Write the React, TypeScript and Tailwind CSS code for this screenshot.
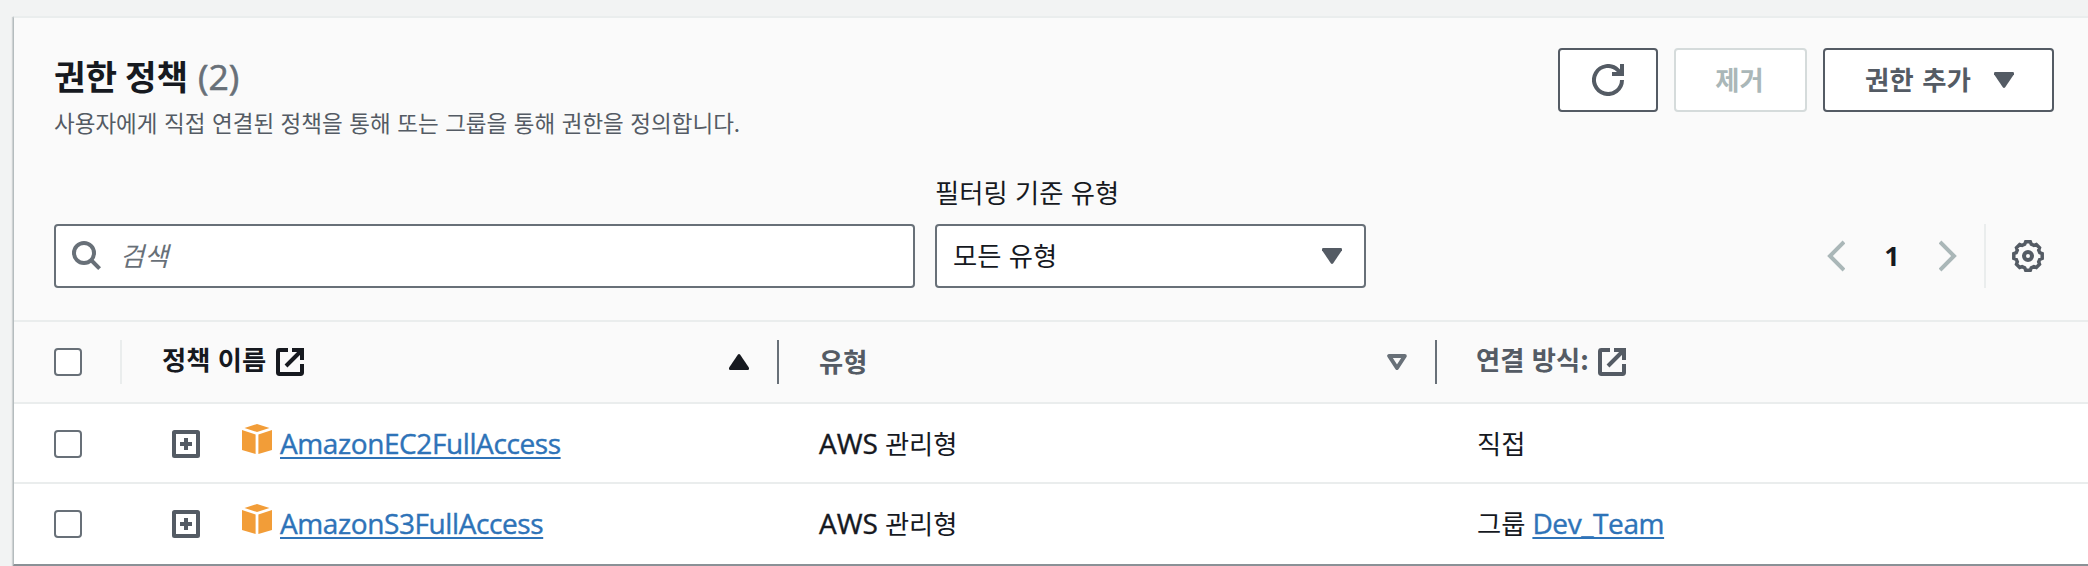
import type { ReactNode } from "react";

const ko = "font-['Noto_Sans_CJK_KR',sans-serif]";
const latin = "font-['Open_Sans','Noto_Sans_CJK_KR',sans-serif]";
const body = "text-[26.3px] leading-[40px] [word-spacing:1.5px] whitespace-nowrap";
const link =
  "text-[28px] leading-[34px] tracking-[-0.4px] whitespace-nowrap text-[#2e73b8] underline decoration-2 underline-offset-[3px] [text-decoration-skip-ink:none] [-webkit-text-stroke:0.4px_#2e73b8]";

function ExternalIcon() {
  return (
    <svg width="28" height="28" viewBox="0 0 28 28" fill="none" stroke="currentColor" strokeWidth="4">
      <path d="M12 2H3.4Q2 2 2 3.4V24.600Q2 26 3.400 26H24.600Q26 26 26 24.600V16" />
      <path d="M16 2H26V12M26 2L10 18" />
    </svg>
  );
}

function Triangle({ up = false }: { up?: boolean }) {
  return (
    <svg width="20" height="16" viewBox="0 0 20 16" fill="currentColor" className={up ? "rotate-180" : ""}>
      <path d="M1.2 0H18.800Q20 0 20 1.200V2.200L11.200 15.200Q10 16.600 8.800 15.200L0 2.200V1.200Q0 0 1.200 0Z" />
    </svg>
  );
}

function OutlineTriangle() {
  return (
    <svg width="20" height="16" viewBox="0 0 20 16" fill="none" stroke="currentColor" strokeWidth="4" strokeLinejoin="round">
      <path d="M2.200 2H17.800L10 14Z" />
    </svg>
  );
}

function SearchIcon() {
  return (
    <svg width="30" height="30" viewBox="0 0 30 30" fill="none" stroke="#687078" strokeWidth="4">
      <circle cx="12" cy="12" r="10" />
      <path d="M19 19L27.600 27.600" />
    </svg>
  );
}

function RefreshIcon() {
  return (
    <svg width="32" height="32" viewBox="0 0 32 32" fill="none" stroke="#545b64" strokeWidth="4">
      <path d="M30 16A14 14 0 1 1 25.900 6.100L28 8.500" />
      <path d="M30 0V10H20" />
    </svg>
  );
}

function Chevron({ right = false }: { right?: boolean }) {
  return (
    <svg width="18" height="32" viewBox="0 0 18 32" fill="none" stroke="#aab7b8" strokeWidth="4" className={right ? "rotate-180" : ""}>
      <path d="M17 2L3 16L17 30" />
    </svg>
  );
}

function GearIcon() {
  return (
    <svg width="32" height="32" viewBox="0 0 32 32" fill="none" stroke="#545b64">
      <path
        strokeWidth="3.5"
        d="M13.700 1.800H18.300L19.300 4.200L21.900 5.300L24.300 4.500L27.500 7.700L26.700 10.100L27.800 12.700L30.200 13.700V18.300L27.800 19.300L26.700 21.900L27.500 24.300L24.300 27.500L21.900 26.700L19.300 27.800L18.300 30.200H13.700L12.700 27.800L10.100 26.700L7.700 27.500L4.500 24.300L5.300 21.900L4.200 19.300L1.800 18.300V13.700L4.200 12.700L5.300 10.100L4.500 7.700L7.700 4.500L10.100 5.300L12.700 4.200Z"
      />
      <circle cx="16" cy="16" r="4" strokeWidth="4" />
    </svg>
  );
}

function ExpandIcon() {
  return (
    <svg width="28" height="28" viewBox="0 0 28 28" fill="none" stroke="#545b64" strokeWidth="4">
      <rect x="2" y="2" width="24" height="24" rx="0.500" />
      <path d="M14 8V20M8 14H20" />
    </svg>
  );
}

function CubeIcon() {
  return (
    <svg width="30" height="30" viewBox="0 0 30 30" fill="#f29d38">
      <path d="M15 0L27.500 4L15 8L2.500 4Z" />
      <path d="M0 6L13.600 10.500V30L0 26Z" />
      <path d="M30 6L16.400 10.500V30L30 26Z" />
    </svg>
  );
}

function Checkbox() {
  return <span className="block size-7 rounded-[4px] border-2 border-[#687078] bg-white" />;
}

function HeaderCell({ children, divider = "bg-[#687078]" }: { children: ReactNode; divider?: string }) {
  return (
    <div className="flex items-center">
      <div className="flex flex-1 items-center pl-10">{children}</div>
      <span className={`h-11 w-[2px] ${divider}`} />
    </div>
  );
}

const columns = "grid grid-cols-[108px_657px_658px_1fr]";

function Row({ name, last = false, children }: { name: string; last?: boolean; children: ReactNode }) {
  return (
    <div className={`${columns} bg-white ${last ? "h-20" : "h-20 border-b-2 border-[#eaeded]"}`}>
      <div className="flex items-start pt-[26px] pl-10">
        <Checkbox />
      </div>
      <div className="flex items-start pt-[20px] pl-[50px]">
        <span className="mt-[6px]"><ExpandIcon /></span>
        <span className="ml-[42px]"><CubeIcon /></span>
        <a className={`${latin} ${link} mt-[2px] ml-2`}>{name}</a>
      </div>
      <div className={`${body} flex items-baseline pt-[19px] pl-10 text-[#16191f]`}>
        <span className={`${latin} text-[28px] leading-[40px] [-webkit-text-stroke:0.4px_#16191f]`}>AWS</span>
        <span className={`${ko} ml-[7px]`}>관리형</span>
      </div>
      <div className={`${body} flex items-baseline pt-[19px] pl-10 text-[#16191f]`}>{children}</div>
    </div>
  );
}

export default function App() {
  return (
    <div className="h-[566px] w-[2088px] overflow-hidden bg-[#f2f3f3] pt-4 pl-[13px]">
      <div className="h-[550px] border-t-2 border-b-2 border-l border-t-[#eaeded] border-b-[#8a9196] border-l-[#b5bcbe] bg-[#fafafa] shadow-[-1px_1px_1px_rgba(0,28,36,0.15)]">
        <div className="flex h-[302px] flex-col pl-10">
          <div className="flex justify-between pt-[30px] pr-[34px]">
            <div>
              <h2 className="-mt-[3px] flex h-[60px] items-baseline whitespace-nowrap">
                <span className={`${ko} text-[34.300px] leading-[60px] font-bold text-[#16191f]`}>권한 정책</span>
                <span className={`${latin} ml-[10px] text-[35.500px] leading-[60px] text-[#687078] [-webkit-text-stroke:0.6px_#687078]`}>(2)</span>
              </h2>
              <p className={`${ko} mt-[1px] text-[22.500px] leading-8 whitespace-nowrap text-[#545b64] [word-spacing:1.500px]`}>
                사용자에게 직접 연결된 정책을 통해 또는 그룹을 통해 권한을 정의합니다.
              </p>
            </div>
            <div className={`${ko} ${body} flex gap-4 font-bold`}>
              <button className="flex h-16 w-[100px] items-center justify-center rounded-[4px] border-2 border-[#545b64] bg-white">
                <RefreshIcon />
              </button>
              <button className="flex h-16 w-[133px] items-center justify-center rounded-[4px] border-2 border-[#d5dbdb] bg-white pr-[2px] pb-[3px] text-[#aab7b8]">
                제거
              </button>
              <button className="flex h-16 w-[231px] items-center justify-between rounded-[4px] border-2 border-[#545b64] bg-white pr-[38px] pl-10 text-[#545b64]">
                <span className="-mt-[3px] tracking-[0.3px] [word-spacing:2px]">권한 추가</span>
                <Triangle />
              </button>
            </div>
          </div>
          <div className="mt-auto flex items-end pb-8">
            <div className="flex h-16 w-[861px] items-center rounded-[4px] border-2 border-[#687078] bg-white pl-4">
              <SearchIcon />
              <span className={`${ko} ${body} -mt-[2px] ml-[18px] text-[#687078] italic`}>검색</span>
            </div>
            <div className="ml-5">
              <div className={`${ko} ${body} mb-[12px] text-[#16191f]`}>필터링 기준 유형</div>
              <div className={`${ko} ${body} flex h-16 w-[431px] items-center justify-between rounded-[4px] border-2 border-[#687078] bg-white pr-[22px] pl-4 text-[#16191f]`}>
                <span className="-mt-[3px]">모든 유형</span>
                <span className="text-[#545b64]"><Triangle /></span>
              </div>
            </div>
            <div className="ml-auto flex h-16 items-center pr-11">
              <Chevron />
              <span className={`${latin} w-[94px] text-center text-[27px] leading-[40px] font-bold text-[#16191f]`}>1</span>
              <Chevron right />
              <span className="ml-[27px] h-16 w-[2px] bg-[#eaeded]" />
              <span className="ml-[26px]"><GearIcon /></span>
            </div>
          </div>
        </div>
        <div className={`${columns} ${ko} ${body} h-[84px] border-y-2 border-[#eaeded] font-bold text-[#545b64]`}>
          <HeaderCell divider="bg-[#eaeded]">
            <Checkbox />
          </HeaderCell>
          <HeaderCell>
            <span className="-mt-[6px] text-[#16191f]">정책 이름</span>
            <span className="ml-[10px] text-[#16191f]"><ExternalIcon /></span>
            <span className="mr-7 ml-auto text-[#16191f]"><Triangle up /></span>
          </HeaderCell>
          <HeaderCell>
            <span className="-mt-[2px]">유형</span>
            <span className="mr-7 ml-auto text-[#687078]"><OutlineTriangle /></span>
          </HeaderCell>
          <div className="flex items-center pl-[39px]">
            <span className="-mt-[6px]">연결 방식:</span>
            <span className="ml-[9px]"><ExternalIcon /></span>
          </div>
        </div>
        <Row name="AmazonEC2FullAccess">
          <span className={ko}>직접</span>
        </Row>
        <Row name="AmazonS3FullAccess" last>
          <span className={ko}>그룹</span>
          <a className={`${latin} ${link} ml-[7px]`}>Dev_Team</a>
        </Row>
      </div>
    </div>
  );
}
